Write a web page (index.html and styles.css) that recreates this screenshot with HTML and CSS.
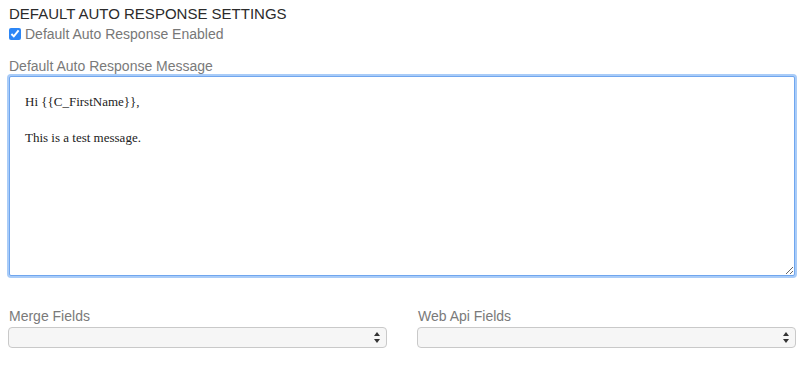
FILE: index.html
```html
<!DOCTYPE html>
<html lang="en">
<head>
  <meta charset="UTF-8">
  <title>Default Auto Response Settings</title>
  <link rel="stylesheet" href="styles.css">
</head>
<body>
  <div class="settings">
    <h3 class="settings-title">DEFAULT AUTO RESPONSE SETTINGS</h3>

    <label class="check-row">
      <input type="checkbox" checked>
      Default Auto Response Enabled
    </label>

    <div class="form-group">
      <label for="auto-message" class="field-label">Default Auto Response Message</label>
      <textarea id="auto-message" class="message-box">Hi {{C_FirstName}},

This is a test message.</textarea>
    </div>

    <div class="field-row">
      <div class="field-col">
        <label class="field-label">Merge Fields</label>
        <div class="select-box">
          <span class="select-arrows"></span>
        </div>
      </div>
      <div class="field-col">
        <label class="field-label">Web Api Fields</label>
        <div class="select-box">
          <span class="select-arrows"></span>
        </div>
      </div>
    </div>
  </div>
</body>
</html>
```

FILE: styles.css
```css
* {
  box-sizing: border-box;
}

body {
  margin: 0;
  padding: 0 8px;
  font-family: 'Liberation Sans', Arial, sans-serif;
  background: #fff;
  color: #333;
}

.settings {
  width: 788px;
}

.settings-title {
  margin: 0;
  padding: 5px 0 0 1px;
  font-size: 15px;
  font-weight: 400;
  line-height: 18px;
  color: #2b2b2b;
}

.check-row {
  display: flex;
  align-items: center;
  gap: 4px;
  margin-top: 2px;
  padding-left: 1px;
  font-size: 14px;
  line-height: 18px;
  color: #777;
}

.check-row input {
  width: 12px;
  height: 12px;
  margin: 0;
  accent-color: #2c86f6;
}

.form-group {
  margin-top: 15px;
}

.field-label {
  display: block;
  padding-left: 1px;
  font-size: 14px;
  line-height: 16px;
  color: #7a7a7a;
}

.message-box {
  display: block;
  width: 786px;
  height: 200px;
  margin: 2px 0 0 1px;
  padding: 16px 15px;
  border: 1px solid #70a6ee;
  border-radius: 2px;
  box-shadow: 0 0 0 2px #a9ccf8;
  outline: none;
  font-family: 'Liberation Serif', 'Times New Roman', serif;
  font-size: 13px;
  line-height: 18px;
  color: #222;
  resize: both;
}

.field-row {
  display: flex;
  gap: 30px;
  margin-top: 32px;
}

.field-col {
  flex: 1;
}

.select-box {
  position: relative;
  height: 21px;
  margin-top: 3px;
  border: 1px solid #c9c9c9;
  border-radius: 4px;
  background: #f6f6f6;
}

.select-arrows {
  position: absolute;
  right: 5px;
  top: 4px;
  width: 7px;
  height: 11px;
}

.select-arrows::before,
.select-arrows::after {
  content: '';
  position: absolute;
  left: 0;
  border-left: 3.5px solid transparent;
  border-right: 3.5px solid transparent;
}

.select-arrows::before {
  top: 0;
  border-bottom: 4px solid #333;
}

.select-arrows::after {
  bottom: 0;
  border-top: 4px solid #333;
}
```
